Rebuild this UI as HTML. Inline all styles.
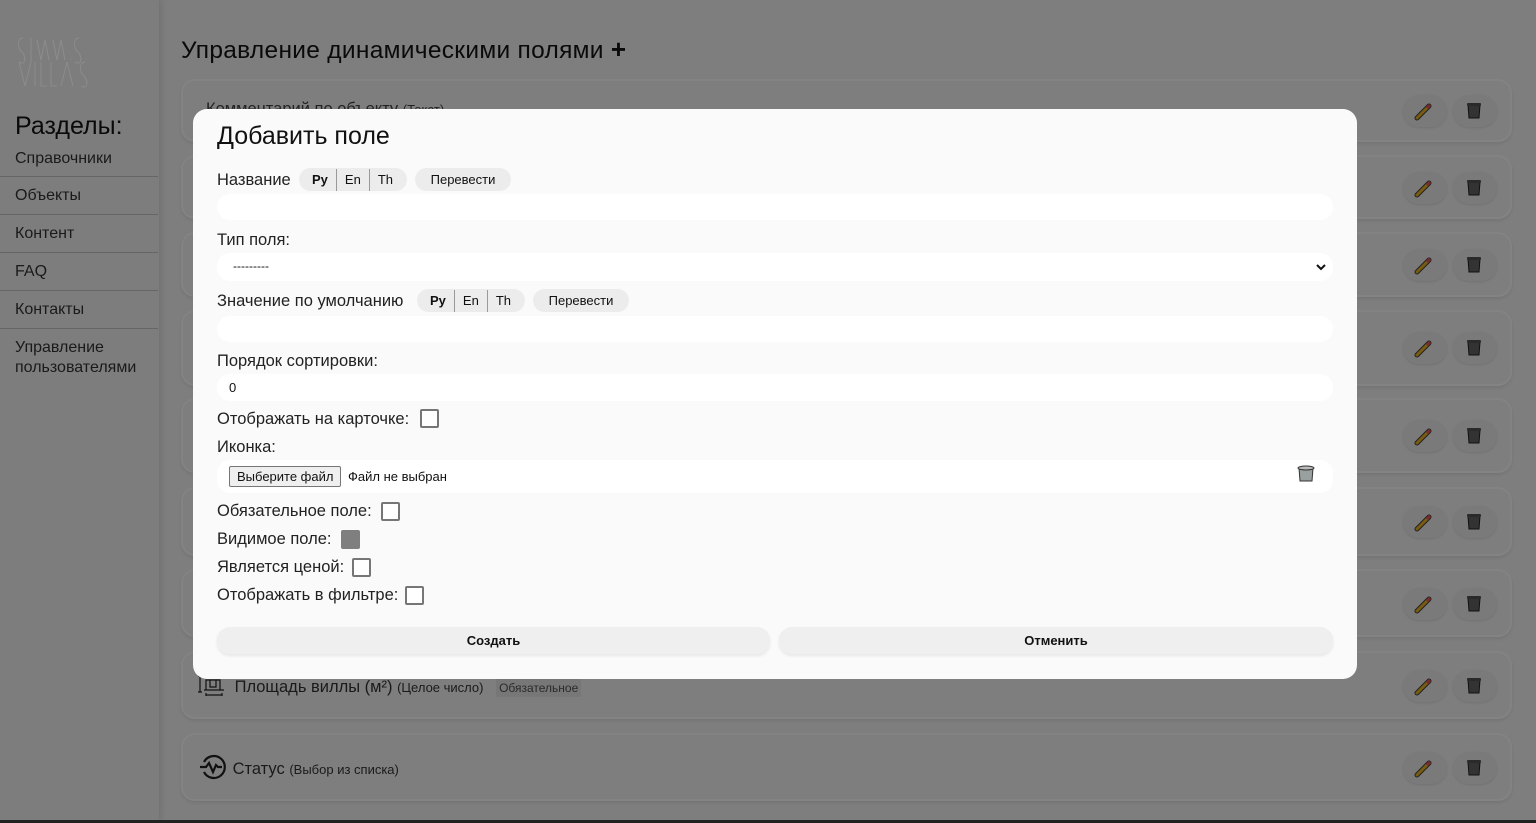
<!DOCTYPE html>
<html><head><meta charset="utf-8"><style>
*{box-sizing:border-box;margin:0;padding:0}
body{width:1536px;height:823px;overflow:hidden;background:#7e7e7e;font-family:"Liberation Sans","DejaVu Sans",sans-serif;position:relative;color:#111}
.side{position:absolute;left:0;top:0;width:159px;height:820px;background:#7d7d7d;box-shadow:2px 0 6px rgba(0,0,0,.12)}
.side h2{position:absolute;left:15px;top:112px;font-size:25px;font-weight:normal;color:#0a0a0a}
.nav{position:absolute;left:0;top:148px;width:158px}
.nav div{font-size:16px;color:#1a1a1a;padding:0 15px;border-bottom:1px solid #666;height:38px;line-height:20px;padding-top:1px}
.nav div:first-child{height:29px}
.nav div:last-child{border:none;padding-top:9px}
.nav div:not(:first-child){padding-top:9px}
h1{position:absolute;left:181px;top:34px;font-size:24.5px;font-weight:normal;color:#0a0a0a;letter-spacing:.3px}
.card{position:absolute;left:181px;width:1331px;border:2px solid #838383;border-radius:14px;box-shadow:0 2px 3px rgba(0,0,0,.08)}
.btn{position:absolute;width:44px;height:32px;border-radius:16px;background:#7a7a7a;box-shadow:0 1px 2px rgba(0,0,0,.1)}
.row{position:absolute;font-size:16.5px;color:#1a1a1a}
.row small{font-size:13px}
.tag{font-size:12px;background:#777;padding:2px 3px;margin-left:8px;color:#2a2a2a}
.bot{position:absolute;left:0;top:820px;width:1536px;height:3px;background:#222}
.modal{position:absolute;left:193px;top:109px;width:1164px;height:570px;background:#fafafa;border-radius:14px}
.m{position:absolute;font-size:16.5px;color:#222}
.pill{position:absolute;height:23px;border-radius:12px;background:#ececec;font-size:13px;display:flex;align-items:center;color:#111}
.pill span{padding:0 8px;border-left:1px solid #999;line-height:22px}
.pill span:first-child{border:none;font-weight:bold}
.inp{position:absolute;left:24px;width:1116px;background:#fff;border-radius:13px}
.cb{position:absolute;width:19px;height:19px;border:2px solid #767676;border-radius:2px;background:#fff}
.big{position:absolute;top:518px;height:27px;border-radius:13px;background:#efefef;font-size:13px;font-weight:bold;display:flex;align-items:center;justify-content:center;box-shadow:0 2px 3px rgba(0,0,0,.08)}
</style></head><body>
<div class="side">
<svg style="position:absolute;left:15px;top:32px" width="78" height="58" viewBox="0 0 78 58" fill="none" stroke="#8c8c8c" stroke-width="1"><path d="M8 6 C2 6 2 16 7 20 C12 26 10 34 4 30"/><path d="M16 6 L16 30 M22 8 L26 28 L30 8 L34 28 M38 8 L42 28 L46 8 L50 28 M56 28 L56 27"/><path d="M64 6 C58 6 58 16 63 20 C68 26 66 34 60 30"/><path d="M4 30 L10 54 L16 30 M20 30 L20 54 M26 30 L26 54 L32 54 M36 30 L36 54 L42 54 M46 54 L52 30 L58 54 M70 30 C64 30 64 40 69 44 C74 50 72 58 66 54"/></svg>
<h2>Разделы:</h2>
<div class="nav"><div>Справочники</div><div>Объекты</div><div>Контент</div><div>FAQ</div><div>Контакты</div><div>Управление<br>пользователями</div></div>
</div>
<h1>Управление динамическими полями <b style="font-size:26px">+</b></h1>

<div class="card" style="top:79px;height:63px"></div>
<div class="row" style="left:206px;top:100px;color:#222">Комментарий по объекту <small>(Текст)</small></div>
<div class="card" style="top:155px;height:64px"></div>
<div class="card" style="top:232px;height:65px"></div>
<div class="card" style="top:310px;height:76px"></div>
<div class="card" style="top:398px;height:75px"></div>
<div class="card" style="top:487px;height:69px"></div>
<div class="card" style="top:569px;height:68px"></div>
<div class="card" style="top:651px;height:68px"></div>
<div class="row" style="left:198px;top:674px"><svg width="32" height="22" viewBox="0 0 32 22" fill="none" stroke="#111" stroke-width="1.2" style="vertical-align:-4px"><path d="M2 2 V18 M0 2 H4 M0 18 H4 M8 16 V6 H22 V16 M12 6 V13 H18 V6 M6 16 H26 M8 21 H24 M8 19 V22 M24 19 V22"/></svg> Площадь виллы (м²) <small>(Целое число)</small> <span class="tag">Обязательное</span></div>
<div class="card" style="top:733px;height:68px"></div>
<div class="row" style="left:198px;top:752px"><svg width="30" height="30" viewBox="0 0 30 30" fill="none" stroke="#111" stroke-width="2.2" style="vertical-align:-8px"><path d="M6 10 A11 11 0 1 1 6 20"/><path d="M2 15 H8 L11 11 L15 20 L18 13 L20 15 H24"/></svg> Статус <small>(Выбор из списка)</small></div>

<div class="btn" style="left:1403px;top:95px"></div><div class="btn" style="left:1453px;top:95px"></div>
<div class="btn" style="left:1403px;top:172px"></div><div class="btn" style="left:1453px;top:172px"></div>
<div class="btn" style="left:1403px;top:249px"></div><div class="btn" style="left:1453px;top:249px"></div>
<div class="btn" style="left:1403px;top:332px"></div><div class="btn" style="left:1453px;top:332px"></div>
<div class="btn" style="left:1403px;top:420px"></div><div class="btn" style="left:1453px;top:420px"></div>
<div class="btn" style="left:1403px;top:506px"></div><div class="btn" style="left:1453px;top:506px"></div>
<div class="btn" style="left:1403px;top:588px"></div><div class="btn" style="left:1453px;top:588px"></div>
<div class="btn" style="left:1403px;top:670px"></div><div class="btn" style="left:1453px;top:670px"></div>
<div class="btn" style="left:1403px;top:752px"></div><div class="btn" style="left:1453px;top:752px"></div>
<svg style="position:absolute;left:0;top:0" width="1536" height="823">
<defs><g id="p"><path d="M-7 7 L5 -5" stroke="#222" stroke-width="5" stroke-linecap="round"/><path d="M-7 7 L5 -5" stroke="#7a5c10" stroke-width="3" stroke-linecap="round"/><path d="M3 -3 L6 -6" stroke="#7a2a30" stroke-width="3"/></g>
<g id="t"><path d="M-6 -6 H6 L5 7 H-5 Z" fill="#333" stroke="#111" stroke-width="1"/><rect x="-7" y="-8" width="14" height="3" rx="1" fill="#2a2a2a"/></g></defs>
<g transform="translate(1424,111)"><use href="#p"/></g><g transform="translate(1474,111)"><use href="#t"/></g>
<g transform="translate(1424,188)"><use href="#p"/></g><g transform="translate(1474,188)"><use href="#t"/></g>
<g transform="translate(1424,265)"><use href="#p"/></g><g transform="translate(1474,265)"><use href="#t"/></g>
<g transform="translate(1424,348)"><use href="#p"/></g><g transform="translate(1474,348)"><use href="#t"/></g>
<g transform="translate(1424,436)"><use href="#p"/></g><g transform="translate(1474,436)"><use href="#t"/></g>
<g transform="translate(1424,522)"><use href="#p"/></g><g transform="translate(1474,522)"><use href="#t"/></g>
<g transform="translate(1424,604)"><use href="#p"/></g><g transform="translate(1474,604)"><use href="#t"/></g>
<g transform="translate(1424,686)"><use href="#p"/></g><g transform="translate(1474,686)"><use href="#t"/></g>
<g transform="translate(1424,768)"><use href="#p"/></g><g transform="translate(1474,768)"><use href="#t"/></g>
</svg>
<div class="bot"></div>

<div class="modal">
<div class="m" style="left:24px;top:13px;font-size:25px;color:#111">Добавить поле</div>
<div class="m" style="left:24px;top:62px">Название</div>
<div class="pill" style="left:106px;top:59px;width:108px;padding-left:5px"><span>Ру</span><span>En</span><span>Th</span></div>
<div class="pill" style="left:222px;top:59px;width:96px;justify-content:center">Перевести</div>
<div class="inp" style="top:85px;height:26px"></div>
<div class="m" style="left:24px;top:122px">Тип поля:</div>
<div class="inp" style="top:144px;height:28px"><span style="position:absolute;left:16px;top:6px;font-size:12px">---------</span><svg style="position:absolute;right:6px;top:9px" width="12" height="10" viewBox="0 0 12 10"><path d="M2 3 L6 7 L10 3" stroke="#111" stroke-width="2" fill="none"/></svg></div>
<div class="m" style="left:24px;top:183px">Значение по умолчанию</div>
<div class="pill" style="left:224px;top:180px;width:108px;padding-left:5px"><span>Ру</span><span>En</span><span>Th</span></div>
<div class="pill" style="left:340px;top:180px;width:96px;justify-content:center">Перевести</div>
<div class="inp" style="top:207px;height:26px"></div>
<div class="m" style="left:24px;top:243px">Порядок сортировки:</div>
<div class="inp" style="top:265px;height:27px"><span style="position:absolute;left:12px;top:6px;font-size:13px">0</span></div>
<div class="m" style="left:24px;top:301px">Отображать на карточке:</div>
<div class="cb" style="left:227px;top:300px"></div>
<div class="m" style="left:24px;top:329px">Иконка:</div>
<div class="inp" style="top:351px;height:33px"><span style="position:absolute;left:12px;top:6px;height:21px;padding:0 7px;border:1px solid #767676;border-radius:2px;background:#efefef;font-size:13px;line-height:19px">Выберите файл</span><span style="position:absolute;left:131px;top:9px;font-size:13px">Файл не выбран</span>
<svg style="position:absolute;left:1079px;top:3px" width="20" height="20" viewBox="-10 -10 20 20"><path d="M-7 -5 H7 L6 8 H-6 Z" fill="#9aa0a0" stroke="#333" stroke-width="1"/><ellipse cx="0" cy="-5" rx="8" ry="2" fill="#bbb" stroke="#333"/></svg></div>
<div class="m" style="left:24px;top:393px">Обязательное поле:</div>
<div class="cb" style="left:188px;top:393px"></div>
<div class="m" style="left:24px;top:421px">Видимое поле:</div>
<div class="cb" style="left:148px;top:421px;background:#7f7f7f;border-color:#7f7f7f"></div>
<div class="m" style="left:24px;top:449px">Является ценой:</div>
<div class="cb" style="left:159px;top:449px"></div>
<div class="m" style="left:24px;top:477px">Отображать в фильтре:</div>
<div class="cb" style="left:212px;top:477px"></div>
<div class="big" style="left:24px;width:553px">Создать</div>
<div class="big" style="left:586px;width:554px">Отменить</div>
</div>
</body></html>
